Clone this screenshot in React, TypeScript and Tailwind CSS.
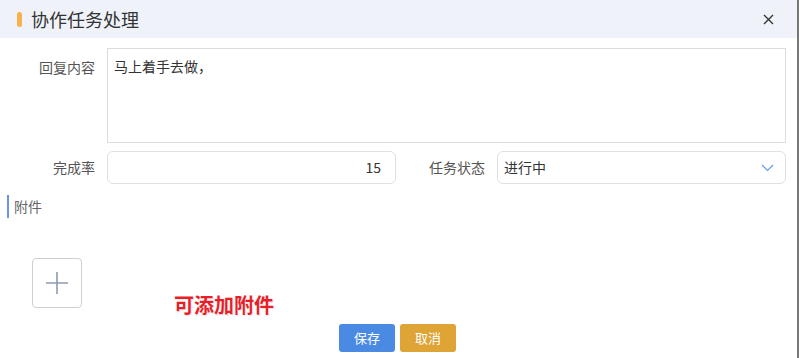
import React from "react";

const font = { fontFamily: '"Noto Sans CJK SC", "Noto Sans", sans-serif' };

export default function App() {
  return (
    <div className="w-[799px] h-[358px] flex bg-white overflow-hidden" style={font}>
      <div className="relative w-[797px] h-full bg-white flex flex-col">
        {/* Header */}
        <div className="h-[38px] bg-[#eff3f9] flex items-center pl-[17px] pr-[23px] shrink-0">
          <div className="w-[5px] h-[15px] rounded-full bg-[#f6b24b]" />
          <div className="ml-[9px] text-[18px] leading-none text-[#333]">协作任务处理</div>
          <div className="flex-1" />
          <svg width="11" height="11" viewBox="0 0 11 11" className="text-[#333]">
            <path d="M1 1 L10 10 M10 1 L1 10" stroke="currentColor" strokeWidth="1.4" fill="none" />
          </svg>
        </div>

        {/* Body */}
        <div className="pt-[10px] flex flex-col">
          <div className="flex">
            <div className="w-[95px] text-right pt-[9px] text-[14px] leading-[20px] text-[#555]">回复内容</div>
            <div className="ml-[12px] w-[679px] h-[95px] border border-[#dcdcdc] px-[6px] pt-[7px] text-[14px] leading-[20px] text-[#333]">
              马上着手去做，
            </div>
          </div>

          <div className="flex items-center mt-[8px] h-[33px]">
            <div className="w-[95px] text-right text-[14px] text-[#555]">完成率</div>
            <div className="ml-[12px] w-[289px] h-[33px] border border-[#e1e1e1] rounded-[6px] flex items-center justify-end pr-[14px] text-[14px] text-[#333]">
              15
            </div>
            <div className="w-[89px] text-right text-[14px] text-[#555]">任务状态</div>
            <div className="ml-[12px] w-[289px] h-[33px] border border-[#e1e1e1] rounded-[6px] flex items-center pl-[6px] pr-[11px] text-[14px] text-[#333]">
              <span>进行中</span>
              <div className="flex-1" />
              <svg width="13" height="8" viewBox="0 0 13 8">
                <path d="M1 1 L6.5 6.5 L12 1" stroke="#5e9cf0" strokeWidth="1.2" fill="none" />
              </svg>
            </div>
          </div>

          <div className="mt-[11px] ml-[7px] flex items-center h-[23px] border-l-2 border-[#6f92e8] pl-[5px] text-[14px] text-[#666]">
            附件
          </div>

          <div className="mt-[40px] ml-[32px] w-[50px] h-[50px] border border-[#cfcfcf] rounded-[4px] flex items-center justify-center">
            <svg width="24" height="24" viewBox="0 0 24 24">
              <path d="M12 1 V23 M1 12 H23" stroke="#8f9aaa" strokeWidth="1.6" fill="none" />
            </svg>
          </div>

          <div className="mt-[16px] flex justify-center gap-[5px] pr-[2px]">
            <div className="w-[56px] h-[28px] rounded-[3px] bg-[#4b8ae3] text-white text-[13px] flex items-center justify-center">保存</div>
            <div className="w-[56px] h-[28px] rounded-[3px] bg-[#dea436] text-white text-[13px] flex items-center justify-center">取消</div>
          </div>
        </div>

        {/* Annotation */}
        <div
          className="absolute left-[174px] top-[293px] text-[20px] font-bold text-[#e81f2a] leading-[24px]"
          style={{ textShadow: "0 0 2px #fff, 0 0 2px #fff, 1px 1px 1px rgba(0,0,0,0.15)" }}
        >
          可添加附件
        </div>
      </div>
      <div className="w-[2px] h-full bg-[#777]" />
    </div>
  );
}
